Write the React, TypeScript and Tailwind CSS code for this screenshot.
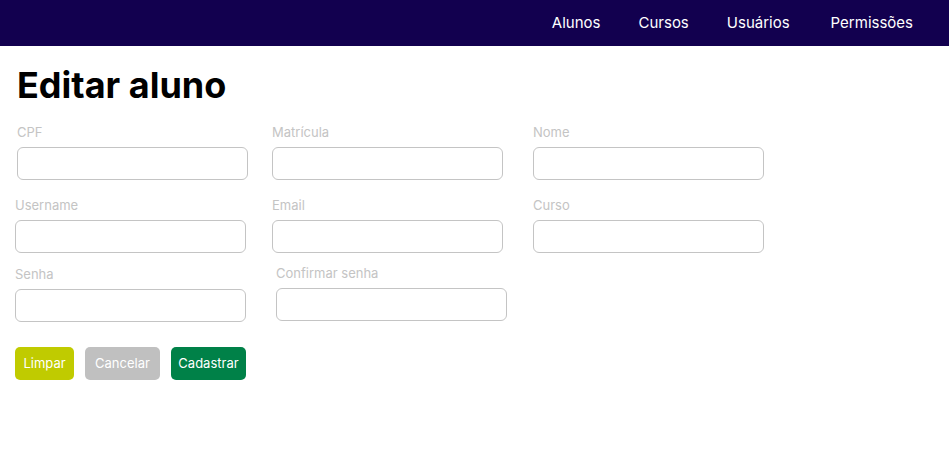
export default function App() {
  const font = { fontFamily: "Inter, 'Noto Sans', sans-serif" };
  return (
    <div className="min-h-screen bg-white" style={font}>
      <header className="flex h-[46px] items-center justify-end bg-[#12004f] pr-[36px] text-[15px] text-white">
        <a className="mr-[38px]">Alunos</a>
        <a className="mr-[38px]">Cursos</a>
        <a className="mr-[41px]">Usuários</a>
        <a>Permissões</a>
      </header>

      <main className="pt-[17px]">
        <h1 className="ml-[17px] text-[36px] font-bold leading-[44px] text-black">Editar aluno</h1>

        <div className="mt-[14px] flex">
          <Field label="CPF" className="ml-[17px]" />
          <Field label="Matrícula" className="ml-[24px]" />
          <Field label="Nome" className="ml-[30px]" />
        </div>

        <div className="mt-[14px] flex">
          <Field label="Username" className="ml-[15px]" />
          <Field label="Email" className="ml-[26px]" />
          <Field label="Curso" className="ml-[30px]" />
        </div>

        <div className="mt-[9px] flex items-end">
          <Field label="Senha" className="ml-[15px]" />
          <Field label="Confirmar senha" className="mb-[1px] ml-[30px]" />
        </div>

        <div className="ml-[15px] mt-[25px] flex gap-[11px] text-[13px] text-white">
          <button className="h-[33px] w-[59px] rounded-[5px] bg-[#c0cb00]">Limpar</button>
          <button className="h-[33px] w-[75px] rounded-[5px] bg-[#c0c0c0]">Cancelar</button>
          <button className="h-[33px] w-[75px] rounded-[5px] bg-[#008148]">Cadastrar</button>
        </div>
      </main>
    </div>
  );
}

function Field({ label, className = "" }: { label: string; className?: string }) {
  return (
    <div className={`flex flex-col ${className}`}>
      <label className="text-[13px] leading-[22px] text-[#c4c4c4]">{label}</label>
      <input className="mt-[4px] h-[33px] w-[231px] rounded-[6px] border border-[#c4c4c4] bg-white outline-none" />
    </div>
  );
}
